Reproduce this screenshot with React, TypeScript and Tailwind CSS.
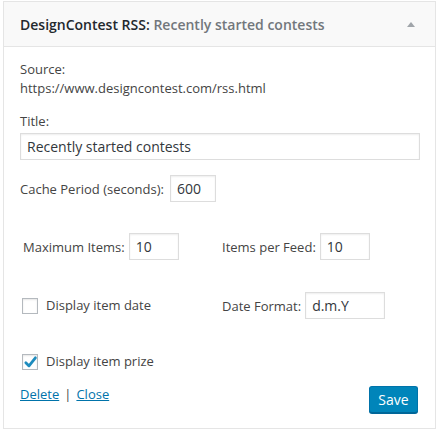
const inputCls =
    'h-[27px] border border-[#ddd] bg-white px-[6px] text-[14px] text-[#32373c] shadow-[inset_0_1px_2px_rgba(0,0,0,0.07)] outline-none'

const Checkbox = ({ checked }: { checked?: boolean }) => (
    <span className="relative flex h-4 w-4 shrink-0 items-center justify-center border border-[#b4b9be] bg-white shadow-[inset_0_1px_2px_rgba(0,0,0,0.1)]">
        {checked && (
            <svg viewBox="0 0 16 16" className="absolute left-[-1px] top-[-1px] h-[17px] w-[17px]">
                <path d="M3.6 8.2 L6.6 11.2 L12.6 3.6" fill="none" stroke="#1e8cbe" strokeWidth="2.6" strokeLinecap="round" strokeLinejoin="round" />
            </svg>
        )}
    </span>
)

const App = () => {
    return (
        <div className="min-h-screen bg-white pl-[3px] pt-[1px] font-['Open_Sans',sans-serif] text-[13px] leading-[19px] text-[#444]">
            <div className="w-[433px] border border-[#e5e5e5] bg-white">
                {/* Header */}
                <div className="flex h-[45px] items-center justify-between border-b border-[#e5e5e5] bg-[#f9f9f9] pl-[16px] pr-[20px]">
                    <h3 className="text-[14px] font-semibold text-[#23282d]">
                        DesignContest RSS: <span className="text-[#72777c]">Recently started contests</span>
                    </h3>
                    <span className="h-0 w-0 border-x-[4px] border-b-[5px] border-x-transparent border-b-[#a0a5aa]" />
                </div>

                {/* Body */}
                <div className="pl-[16px] pr-[15px] pt-[13px] pb-[15px]">
                    <p>Source:</p>
                    <p>https://www.designcontest.com/rss.html</p>

                    <p className="mt-[14px]">Title:</p>
                    <input className={`${inputCls} mt-[2px] w-full`} defaultValue="Recently started contests" />

                    <div className="mt-[15px] flex items-center gap-[6px]">
                        <span className="pt-[2px]">Cache Period (seconds):</span>
                        <input className={`${inputCls} w-[46px]`} defaultValue="600" />
                    </div>

                    <div className="mt-[31px] flex items-center">
                        <div className="flex w-[202px] items-center gap-[4px] pl-[3px]">
                            <span className="pt-[2px]">Maximum Items:</span>
                            <input className={`${inputCls} w-[50px]`} defaultValue="10" />
                        </div>
                        <div className="flex items-center gap-[4px]">
                            <span className="pt-[2px]">Items per Feed:</span>
                            <input className={`${inputCls} w-[50px]`} defaultValue="10" />
                        </div>
                    </div>

                    <div className="mt-[32px] flex items-center">
                        <label className="flex w-[202px] items-center gap-[8px] pl-[2px]">
                            <Checkbox />
                            <span>Display item date</span>
                        </label>
                        <div className="flex items-center gap-[4px]">
                            <span className="pt-[2px]">Date Format:</span>
                            <input className={`${inputCls} w-[80px]`} defaultValue="d.m.Y" />
                        </div>
                    </div>

                    <label className="mt-[33px] flex items-center gap-[8px] pl-[2px]">
                        <Checkbox checked />
                        <span>Display item prize</span>
                    </label>

                    <div className="mt-[14px] flex items-start justify-between">
                        <div>
                            <a href="#" className="text-[#0073aa] underline">Delete</a>
                            <span className="mx-[5px]">|</span>
                            <a href="#" className="text-[#0073aa] underline">Close</a>
                        </div>
                        <button className="mr-[2px] mt-[1px] h-[27px] w-[49px] rounded-[3px] border border-[#0073aa] border-b-[#006799] bg-[#0085ba] text-[14px] text-white shadow-[0_1px_0_#006799]">
                            Save
                        </button>
                    </div>
                </div>
            </div>
        </div>
    )
}

export default App
